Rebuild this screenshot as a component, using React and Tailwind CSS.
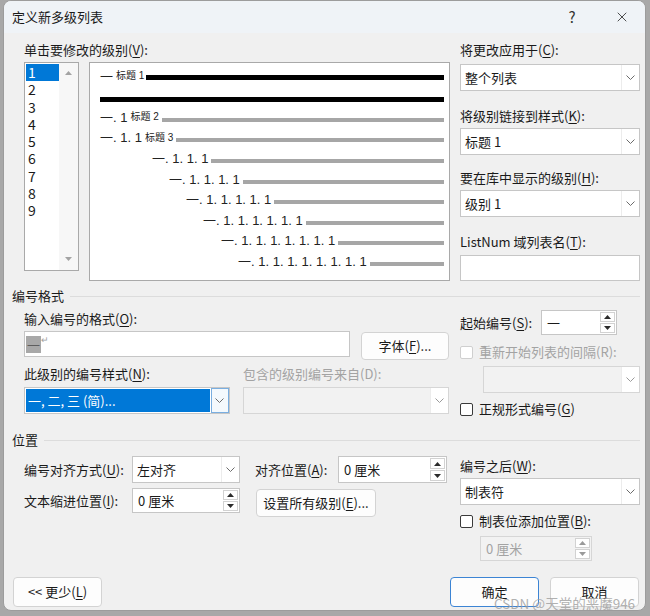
import React from 'react';
import { X } from 'lucide-react';

const U = ({ children }) => <span className="underline underline-offset-[2px] decoration-[1px]">{children}</span>;

function Chevron({ color = '#6b6b6b' }) {
  return (
    <svg width="9" height="5" viewBox="0 0 9 5" fill="none">
      <path d="M0.5 0.5L4.5 4.5L8.5 0.5" stroke={color} strokeWidth="1" />
    </svg>
  );
}

function Tri({ up, color = '#333' }) {
  return (
    <svg width="7" height="4" viewBox="0 0 7 4">
      <path d={up ? 'M0 4L3.5 0L7 4Z' : 'M0 0L3.5 4L7 0Z'} fill={color} />
    </svg>
  );
}

function Combo({ className, text, disabled, selected }) {
  return (
    <div className={`flex border ${disabled ? 'border-[#d6d6d6] bg-[#f2f2f2]' : 'border-[#c6c6c6] bg-white'} ${className}`}>
      <div className="flex-1 flex items-center p-[1px]">
        {selected ? (
          <div className="w-full h-full bg-[#0078d7] text-white flex items-center pl-[2px]">{text}</div>
        ) : (
          <span className="pl-[3px]">{text}</span>
        )}
      </div>
      <div className={`w-[18px] flex items-center justify-center ${selected ? 'border border-[#7aaee0] bg-[#f4f9fd]' : 'bg-white border-l border-[#ececec]'}`}>
        <Chevron color={disabled ? '#9a9a9a' : '#6b6b6b'} />
      </div>
    </div>
  );
}

function Spin({ className, text, disabled }) {
  return (
    <div className={`flex border ${disabled ? 'border-[#d6d6d6] bg-[#f2f2f2] text-[#a3a3a3]' : 'border-[#c6c6c6] bg-white'} ${className}`}>
      <div className="flex-1 flex items-center pl-[5px]">{text}</div>
      <div className="w-[17px] flex flex-col p-[1px] gap-[1px]">
        <div className="flex-1 border border-[#d2d2d2] bg-white flex items-center justify-center">
          <Tri up color={disabled ? '#9a9a9a' : '#2b2b2b'} />
        </div>
        <div className="flex-1 border border-[#d2d2d2] bg-white flex items-center justify-center">
          <Tri color={disabled ? '#9a9a9a' : '#2b2b2b'} />
        </div>
      </div>
    </div>
  );
}

function Check({ label, disabled }) {
  return (
    <div className={`flex items-center h-[16px] ${disabled ? 'text-[#a3a3a3]' : ''}`}>
      <div className={`w-[13px] h-[13px] rounded-[2px] border bg-white ${disabled ? 'border-[#cfcfcf]' : 'border-[#3a3a3a]'}`} />
      <span className="ml-[6px]">{label}</span>
    </div>
  );
}

function Btn({ className, children, primary }) {
  return (
    <div className={`flex items-center justify-center rounded-[4px] bg-[#fdfdfd] border ${primary ? 'border-[#3c84d4]' : 'border-[#d3d3d3]'} ${className}`}>
      {children}
    </div>
  );
}

function Heading({ children, className }) {
  return (
    <div className={`flex items-center h-[18px] pr-[5px] ${className}`}>
      <span>{children}</span>
      <div className="flex-1 h-px bg-[#dcdcdc] ml-[6px]" />
    </div>
  );
}

const levels = [
  { pl: 'pl-[62px]', text: '一. 1. 1. 1' },
  { pl: 'pl-[79px]', text: '一. 1. 1. 1. 1' },
  { pl: 'pl-[96px]', text: '一. 1. 1. 1. 1. 1' },
  { pl: 'pl-[113px]', text: '一. 1. 1. 1. 1. 1. 1' },
  { pl: 'pl-[131px]', text: '一. 1. 1. 1. 1. 1. 1. 1' },
  { pl: 'pl-[148px]', text: '一. 1. 1. 1. 1. 1. 1. 1. 1' },
];

function Preview() {
  return (
    <div className="w-[361px] h-[219px] border border-[#a9a9a9] bg-white pt-[3px] pr-[5px] text-[13px] text-[#222] font-['Liberation_Sans','Noto_Sans_CJK_SC',sans-serif] leading-none">
      <div className="h-[20px] flex items-center pl-[10px]">
        <span>一</span>
        <span className="text-[10px] ml-[3px]">标题 1</span>
        <div className="flex-1 h-[5px] bg-black ml-[2px] mt-[3px]" />
      </div>
      <div className="h-[20px] mt-[3px] flex items-center pl-[10px]">
        <div className="flex-1 h-[5px] bg-black" />
      </div>
      <div className="h-[20.6px] mt-[-2px] flex items-center pl-[10px]">
        <span>一. 1</span>
        <span className="text-[10px] ml-[3px]">标题 2</span>
        <div className="flex-1 h-[4px] bg-[#a6a6a6] ml-[3px] mt-[5px]" />
      </div>
      <div className="h-[20.6px] flex items-center pl-[10px]">
        <span>一. 1. 1</span>
        <span className="text-[10px] ml-[3px]">标题 3</span>
        <div className="flex-1 h-[4px] bg-[#a6a6a6] ml-[3px] mt-[5px]" />
      </div>
      {levels.map((l, i) => (
        <div key={i} className={`h-[20.6px] flex items-center ${l.pl}`}>
          <span>{l.text}</span>
          <div className="flex-1 h-[4px] bg-[#a6a6a6] ml-[3px] mt-[5px]" />
        </div>
      ))}
    </div>
  );
}

function LevelList() {
  return (
    <div className="w-[55px] h-[209px] border border-[#a9a9a9] bg-white flex">
      <div className="flex-1 pt-[1px] pl-[1px] text-[14px] leading-[17.25px]">
        {[1, 2, 3, 4, 5, 6, 7, 8, 9].map(n => (
          <div key={n} className={`pl-[2px] ${n === 1 ? 'bg-[#0078d7] text-white' : ''}`}>{n}</div>
        ))}
      </div>
      <div className="w-[19px] bg-[#f7f7f7] flex flex-col items-center justify-between pt-[8px] pb-[9px]">
        <Tri up color="#a3a3a3" />
        <Tri color="#a3a3a3" />
      </div>
    </div>
  );
}

export default function App() {
  return (
    <div className="relative w-[650px] h-[616px] bg-[#a8a8a8] pl-[3px] font-['Noto_Sans_CJK_SC',sans-serif] text-[13px] text-[#1a1a1a] leading-[18px]">
      <div className="w-[643px] h-[611px] border border-[#9c9c9c] rounded-[8px] bg-[#f0f0f0] overflow-hidden flex flex-col">
        {/* title bar */}
        <div className="h-[32px] flex items-center bg-[#eff3f7] pl-[8px]">
          <span className="text-[13px]">定义新多级列表</span>
          <div className="ml-auto flex items-center h-full">
            <div className="w-[46px] text-center text-[15px] text-[#333]">?</div>
            <div className="w-[46px] ml-[4px] flex items-center justify-center">
              <X size={16} strokeWidth={1.2} color="#222" />
            </div>
          </div>
        </div>

        <div className="flex-1 flex flex-col pl-[8px]">
          {/* level + preview */}
          <div className="flex pt-[8px] pl-[12px]">
            <div className="w-[426px]">
              <div className="h-[18px]">单击要修改的级别(<U>V</U>):</div>
              <div className="flex mt-[3px]">
                <LevelList />
                <div className="ml-[10px]"><Preview /></div>
              </div>
            </div>
            <div className="w-[180px] ml-[10px]">
              <div className="h-[18px]">将更改应用于(<U>C</U>):</div>
              <Combo className="mt-[5px] h-[27px]" text="整个列表" />
              <div className="h-[18px] mt-[16px]">将级别链接到样式(<U>K</U>):</div>
              <Combo className="mt-[3px] h-[27px]" text="标题 1" />
              <div className="h-[18px] mt-[14px]">要在库中显示的级别(<U>H</U>):</div>
              <Combo className="mt-[3px] h-[27px]" text="级别 1" />
              <div className="h-[18px] mt-[16px]">ListNum 域列表名(<U>T</U>):</div>
              <div className="mt-[4px] h-[26px] border border-[#c6c6c6] bg-white" />
            </div>
          </div>

          {/* 编号格式 */}
          <Heading className="mt-[6px]">编号格式</Heading>
          <div className="flex mt-[5px] pl-[12px]">
            <div className="w-[425px]">
              <div className="h-[18px]">输入编号的格式(<U>O</U>):</div>
              <div className="flex items-start mt-[3px]">
                <div className="w-[326px] h-[26px] border border-[#c6c6c6] bg-white flex items-center pl-[1px]">
                  <span className="bg-[#a8a8a8] text-[#5e5e5e] px-[1px] leading-[17px]">一</span>
                  <span className="text-[9px] text-[#a0a0a0] self-start mt-[3px] leading-none">↵</span>
                </div>
                <Btn className="ml-[11px] mt-[1px] w-[88px] h-[28px]">字体(<U>F</U>)...</Btn>
              </div>
              <div className="flex mt-[5px] h-[18px]">
                <div className="w-[219px]">此级别的编号样式(<U>N</U>):</div>
                <div className="text-[#a3a3a3]">包含的级别编号来自(D):</div>
              </div>
              <div className="flex mt-[4px]">
                <Combo className="w-[206px] h-[27px]" text="一, 二, 三 (简)..." selected />
                <Combo className="ml-[13px] w-[207px] h-[27px]" text="" disabled />
              </div>
            </div>
            <div className="w-[180px] ml-[11px]">
              <div className="flex items-center h-[25px]">
                <div className="w-[81px]">起始编号(<U>S</U>):</div>
                <Spin className="w-[76px] h-[25px]" text="一" />
              </div>
              <div className="mt-[9px]"><Check label="重新开始列表的间隔(R):" disabled /></div>
              <Combo className="ml-[23px] mt-[6px] w-[157px] h-[27px]" text="" disabled />
              <div className="mt-[8px]"><Check label={<>正规形式编号(<U>G</U>)</>} /></div>
            </div>
          </div>

          {/* 位置 */}
          <Heading className="mt-[14px]">位置</Heading>
          <div className="flex mt-[7px] pl-[12px]">
            <div className="w-[423px]">
              <div className="flex items-center h-[27px]">
                <div className="w-[108px]">编号对齐方式(<U>U</U>):</div>
                <Combo className="w-[108px] h-[27px]" text="左对齐" />
                <div className="w-[83px] ml-[15px]">对齐位置(<U>A</U>):</div>
                <Spin className="w-[109px] h-[27px]" text="0 厘米" />
              </div>
              <div className="flex items-start mt-[5px]">
                <div className="w-[108px] h-[25px] flex items-center">文本缩进位置(<U>I</U>):</div>
                <Spin className="w-[108px] h-[25px]" text="0 厘米" />
                <Btn className="ml-[16px] mt-[1px] w-[120px] h-[28px]">设置所有级别(<U>E</U>)...</Btn>
              </div>
            </div>
            <div className="w-[180px] ml-[13px]">
              <div className="h-[18px] mt-[1px]">编号之后(<U>W</U>):</div>
              <Combo className="mt-[3px] h-[27px]" text="制表符" />
              <div className="mt-[8px]"><Check label={<>制表位添加位置(<U>B</U>):</>} /></div>
              <Spin className="ml-[20px] mt-[7px] w-[112px] h-[25px]" text="0 厘米" disabled />
            </div>
          </div>

          {/* bottom buttons */}
          <div className="mt-auto mb-[3px] flex items-center pr-[6px]">
            <Btn className="ml-[1px] w-[89px] h-[30px]">&lt;&lt; 更少(<U>L</U>)</Btn>
            <Btn className="ml-auto w-[89px] h-[30px]" primary>确定</Btn>
            <Btn className="ml-[11px] w-[89px] h-[30px]">取消</Btn>
          </div>
        </div>
      </div>
      <div className="absolute left-[494px] top-[594px] text-[13.5px] leading-[18px] text-[#9c9c9c]/80 whitespace-nowrap">CSDN @天堂的恶魔946</div>
    </div>
  );
}
